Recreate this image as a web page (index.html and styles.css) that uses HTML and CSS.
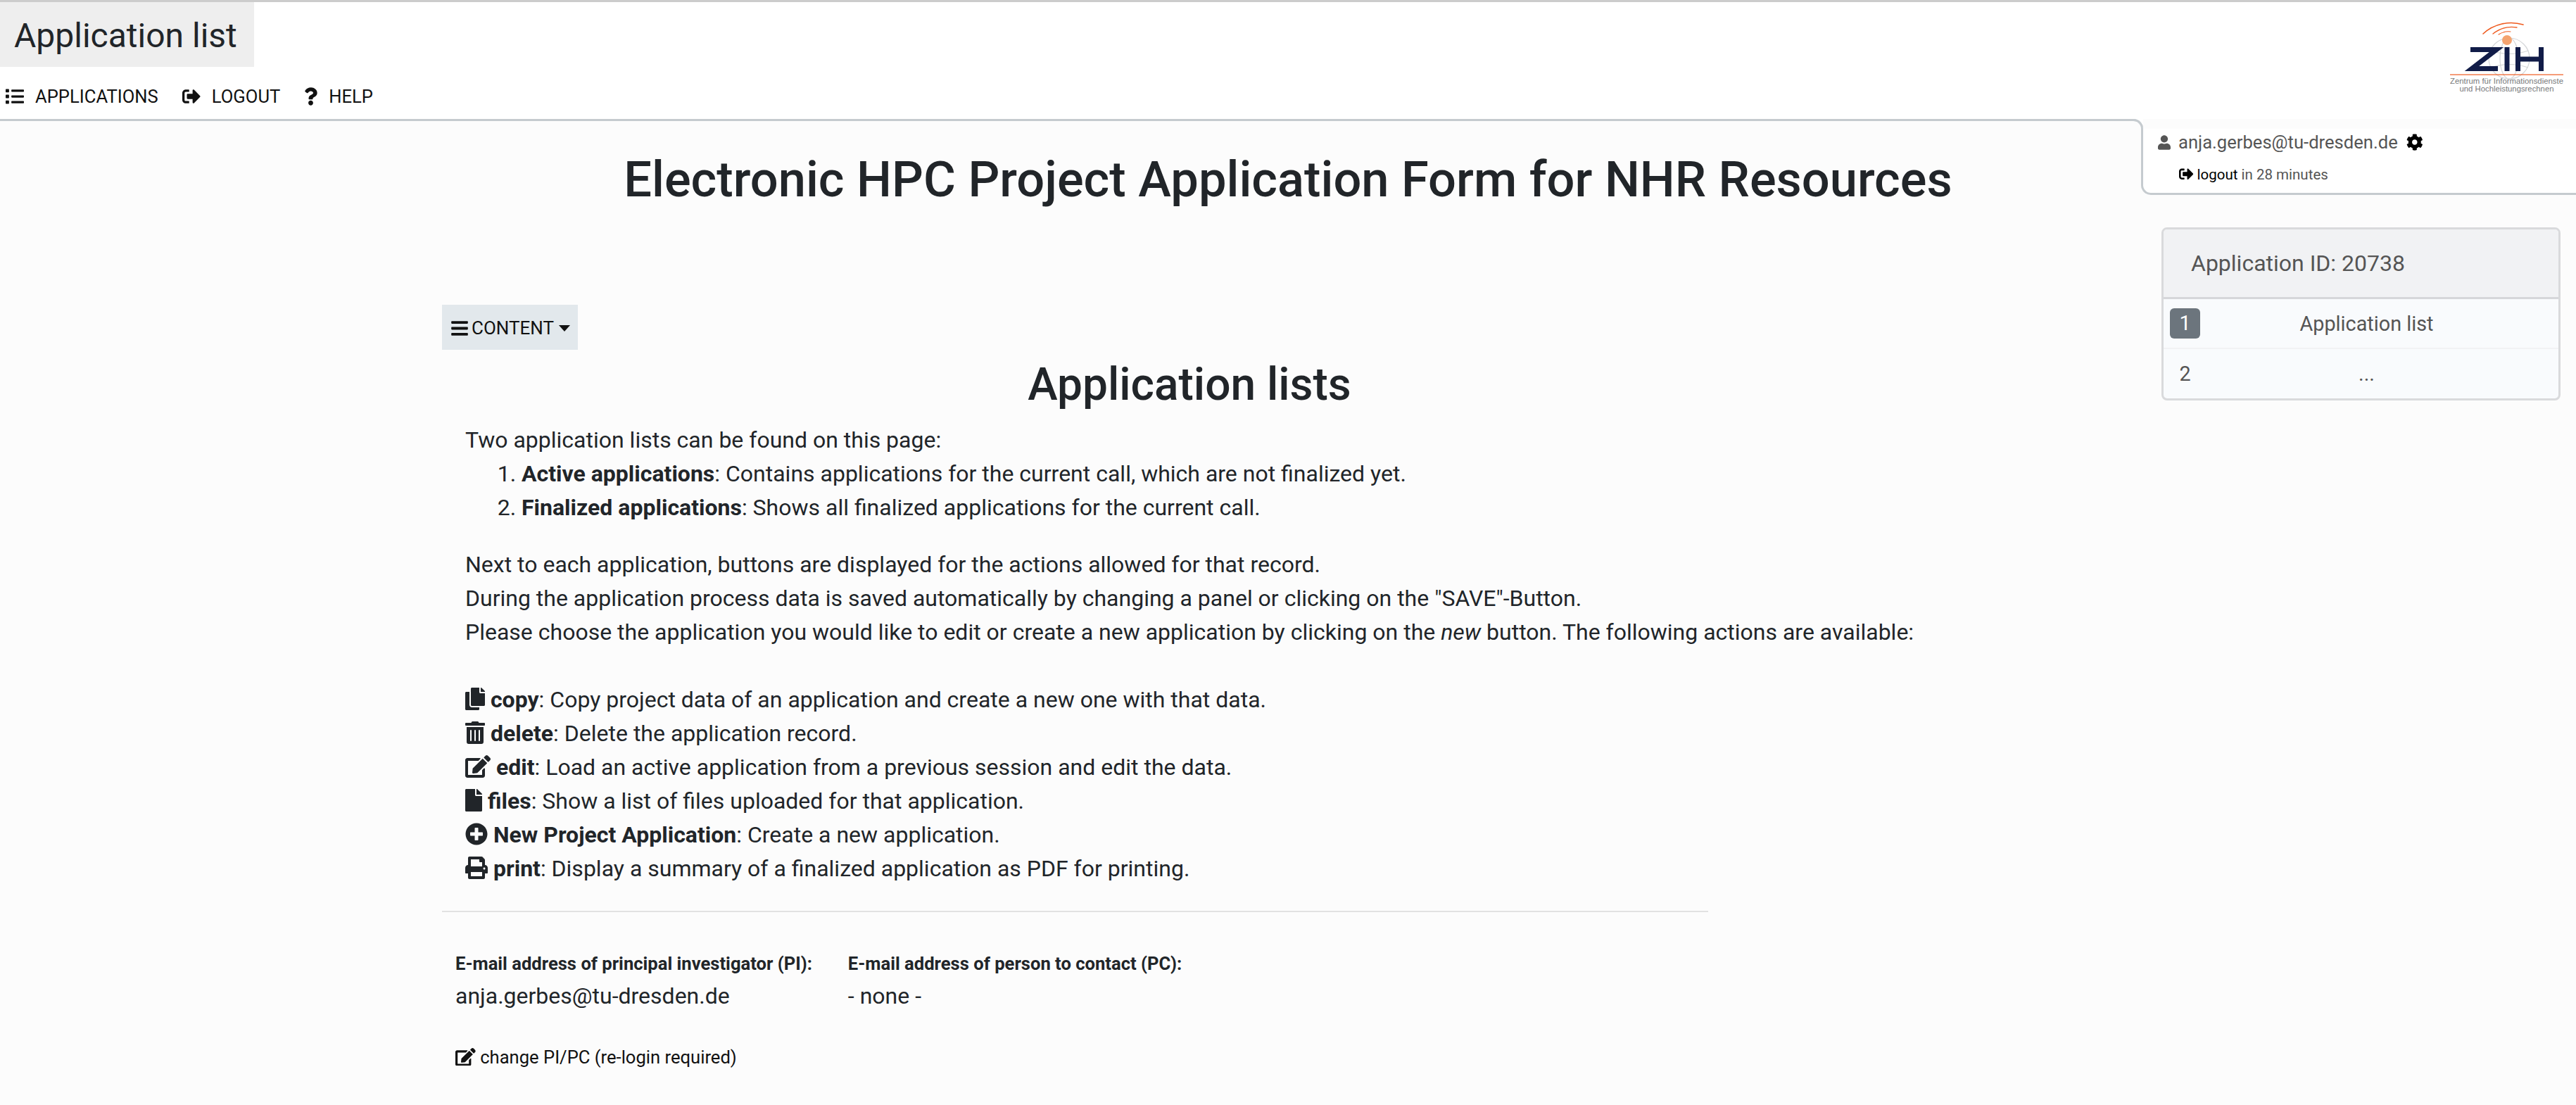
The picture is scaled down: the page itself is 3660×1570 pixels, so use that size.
FILE: index.html
```html
<!DOCTYPE html>
<html lang="en">
<head>
  <meta charset="UTF-8" />
  <title>Application list</title>
  <link rel="stylesheet" href="styles.css">
</head>
<body>
  <svg class="defs" aria-hidden="true">
    <symbol id="i-list" viewBox="0 0 512 512"><path d="M80 368H16a16 16 0 0 0-16 16v64a16 16 0 0 0 16 16h64a16 16 0 0 0 16-16v-64a16 16 0 0 0-16-16zm0-320H16A16 16 0 0 0 0 64v64a16 16 0 0 0 16 16h64a16 16 0 0 0 16-16V64a16 16 0 0 0-16-16zm0 160H16a16 16 0 0 0-16 16v64a16 16 0 0 0 16 16h64a16 16 0 0 0 16-16v-64a16 16 0 0 0-16-16zm416 176H176a16 16 0 0 0-16 16v32a16 16 0 0 0 16 16h320a16 16 0 0 0 16-16v-32a16 16 0 0 0-16-16zm0-320H176a16 16 0 0 0-16 16v32a16 16 0 0 0 16 16h320a16 16 0 0 0 16-16V80a16 16 0 0 0-16-16zm0 160H176a16 16 0 0 0-16 16v32a16 16 0 0 0 16 16h320a16 16 0 0 0 16-16v-32a16 16 0 0 0-16-16z"/></symbol>
    <symbol id="i-signout" viewBox="0 0 512 512"><path d="M497 273L329 441c-15 15-41 4.5-41-17v-96H152c-13.3 0-24-10.7-24-24v-96c0-13.3 10.7-24 24-24h136V88c0-21.4 25.9-32 41-17l168 168c9.3 9.4 9.3 24.6 0 34zM192 436v-40c0-6.6-5.4-12-12-12H96c-17.7 0-32-14.3-32-32V160c0-17.7 14.3-32 32-32h84c6.6 0 12-5.4 12-12V76c0-6.6-5.4-12-12-12H96c-53 0-96 43-96 96v192c0 53 43 96 96 96h84c6.6 0 12-5.4 12-12z"/></symbol>
    <symbol id="i-question" viewBox="0 0 384 512"><path d="M202.021 0C122.202 0 70.503 32.703 29.914 91.026c-7.363 10.58-5.093 25.086 5.178 32.874l43.138 32.709c10.373 7.865 25.132 6.026 33.253-4.148 25.049-31.381 43.63-49.449 82.757-49.449 30.764 0 68.816 19.799 68.816 49.631 0 22.552-18.617 34.134-48.993 51.164-35.423 19.86-82.299 44.576-82.299 106.405V320c0 13.255 10.745 24 24 24h72.471c13.255 0 24-10.745 24-24v-5.773c0-42.86 125.268-44.645 125.268-160.627C377.504 66.256 286.902 0 202.021 0zM192 373.459c-38.196 0-69.271 31.075-69.271 69.271 0 38.195 31.075 69.27 69.271 69.27s69.271-31.075 69.271-69.271-31.075-69.27-69.271-69.27z"/></symbol>
    <symbol id="i-user" viewBox="0 0 448 512"><path d="M224 256c70.7 0 128-57.3 128-128S294.7 0 224 0 96 57.3 96 128s57.3 128 128 128zm89.6 32h-16.7c-22.2 10.2-46.9 16-72.9 16s-50.6-5.8-72.9-16h-16.7C60.2 288 0 348.2 0 422.4V464c0 26.5 21.5 48 48 48h352c26.5 0 48-21.5 48-48v-41.6c0-74.2-60.2-134.4-134.4-134.4z"/></symbol>
    <symbol id="i-cog" viewBox="0 0 512 512"><path d="M487.4 315.7l-42.6-24.6c4.3-23.2 4.3-47 0-70.2l42.6-24.6c4.9-2.8 7.1-8.6 5.5-14-11.1-35.6-30-67.8-54.7-94.6-3.8-4.1-10-5.1-14.8-2.3L380.8 110c-17.9-15.4-38.5-27.3-60.8-35.1V25.8c0-5.6-3.9-10.5-9.4-11.7-36.7-8.2-74.3-7.8-109.2 0-5.5 1.2-9.4 6.1-9.4 11.7V75c-22.2 7.9-42.8 19.8-60.8 35.1L88.7 85.5c-4.9-2.8-11-1.9-14.8 2.3-24.7 26.7-43.6 58.9-54.7 94.6-1.7 5.4.6 11.2 5.5 14L67.3 221c-4.3 23.2-4.3 47 0 70.2l-42.6 24.6c-4.9 2.8-7.1 8.6-5.5 14 11.1 35.6 30 67.8 54.7 94.6 3.8 4.1 10 5.1 14.8 2.3l42.6-24.6c17.9 15.4 38.5 27.3 60.8 35.1v49.2c0 5.6 3.9 10.5 9.4 11.7 36.7 8.2 74.3 7.8 109.2 0 5.5-1.2 9.4-6.1 9.4-11.7v-49.2c22.2-7.9 42.8-19.8 60.8-35.1l42.6 24.6c4.9 2.8 11 1.9 14.8-2.3 24.7-26.7 43.6-58.9 54.7-94.6 1.5-5.5-.7-11.3-5.6-14.1zM256 336c-44.1 0-80-35.9-80-80s35.9-80 80-80 80 35.9 80 80-35.9 80-80 80z"/></symbol>
    <symbol id="i-bars" viewBox="0 0 448 512"><path d="M16 132h416c8.837 0 16-7.163 16-16V76c0-8.837-7.163-16-16-16H16C7.163 60 0 67.163 0 76v40c0 8.837 7.163 16 16 16zm0 160h416c8.837 0 16-7.163 16-16v-40c0-8.837-7.163-16-16-16H16c-8.837 0-16 7.163-16 16v40c0 8.837 7.163 16 16 16zm0 160h416c8.837 0 16-7.163 16-16v-40c0-8.837-7.163-16-16-16H16c-8.837 0-16 7.163-16 16v40c0 8.837 7.163 16 16 16z"/></symbol>
    <symbol id="i-copy" viewBox="0 0 448 512"><path d="M320 448v40c0 13.255-10.745 24-24 24H24c-13.255 0-24-10.745-24-24V120c0-13.255 10.745-24 24-24h72v296c0 30.879 25.121 56 56 56h168zm0-344V0H152c-13.255 0-24 10.745-24 24v368c0 13.255 10.745 24 24 24h272c13.255 0 24-10.745 24-24V128H344c-13.2 0-24-10.8-24-24zm120.971-31.029L375.029 7.029A24 24 0 0 0 358.059 0H352v96h96v-6.059a24 24 0 0 0-7.029-16.97z"/></symbol>
    <symbol id="i-trash" viewBox="0 0 448 512"><path d="M32 464a48 48 0 0 0 48 48h288a48 48 0 0 0 48-48V128H32zm272-256a16 16 0 0 1 32 0v224a16 16 0 0 1-32 0zm-96 0a16 16 0 0 1 32 0v224a16 16 0 0 1-32 0zm-96 0a16 16 0 0 1 32 0v224a16 16 0 0 1-32 0zM432 32H312l-9.4-18.7A24 24 0 0 0 281.1 0H166.8a23.72 23.72 0 0 0-21.4 13.3L136 32H16A16 16 0 0 0 0 48v32a16 16 0 0 0 16 16h416a16 16 0 0 0 16-16V48a16 16 0 0 0-16-16z"/></symbol>
    <symbol id="i-edit" viewBox="0 0 576 512"><path d="M402.6 83.2l90.2 90.2c3.8 3.8 3.8 10 0 13.8L274.4 405.6l-92.8 10.3c-12.4 1.4-22.9-9.1-21.5-21.5l10.3-92.8L388.8 83.2c3.8-3.8 10-3.8 13.8 0zm162-22.9l-48.8-48.8c-15.2-15.2-39.9-15.2-55.2 0l-35.4 35.4c-3.8 3.8-3.8 10 0 13.8l90.2 90.2c3.8 3.8 10 3.8 13.8 0l35.4-35.4c15.2-15.3 15.2-40 0-55.2zM384 346.2V448H64V128h229.8c3.2 0 6.2-1.3 8.5-3.5l40-40c7.6-7.6 2.2-20.5-8.5-20.5H48C21.5 64 0 85.5 0 112v352c0 26.5 21.5 48 48 48h352c26.5 0 48-21.5 48-48V306.2c0-10.7-12.9-16-20.5-8.5l-40 40c-2.2 2.3-3.5 5.3-3.5 8.5z"/></symbol>
    <symbol id="i-file" viewBox="0 0 384 512"><path d="M224 136V0H24C10.7 0 0 10.7 0 24v464c0 13.3 10.7 24 24 24h336c13.3 0 24-10.7 24-24V160H248c-13.2 0-24-10.8-24-24zm160-14.1v6.1H256V0h6.1c6.4 0 12.5 2.5 17 7l97.9 98c4.5 4.5 7 10.6 7 16.9z"/></symbol>
    <symbol id="i-plus" viewBox="0 0 512 512"><path d="M256 8C119 8 8 119 8 256s111 248 248 248 248-111 248-248S393 8 256 8zm144 276c0 6.6-5.4 12-12 12h-92v92c0 6.6-5.4 12-12 12h-56c-6.6 0-12-5.4-12-12v-92h-92c-6.6 0-12-5.4-12-12v-56c0-6.6 5.4-12 12-12h92v-92c0-6.6 5.4-12 12-12h56c6.6 0 12 5.4 12 12v92h92c6.6 0 12 5.4 12 12v56z"/></symbol>
    <symbol id="i-print" viewBox="0 0 512 512"><path d="M448 192V77.25c0-8.49-3.37-16.62-9.37-22.63L393.37 9.37c-6-6-14.14-9.37-22.63-9.37H96C78.33 0 64 14.33 64 32v160c-35.35 0-64 28.65-64 64v112c0 8.84 7.16 16 16 16h48v96c0 17.67 14.33 32 32 32h320c17.67 0 32-14.33 32-32v-96h48c8.84 0 16-7.16 16-16V256c0-35.35-28.65-64-64-64zm-64 256H128v-96h256v96zm0-224H128V64h192v48c0 8.84 7.16 16 16 16h48v96zm48 72c-13.25 0-24-10.75-24-24 0-13.26 10.75-24 24-24s24 10.74 24 24c0 13.25-10.75 24-24 24z"/></symbol>
  </svg>

  <header class="topbar">
    <div class="topbar-left">
      <div class="page-title">Application list</div>
      <nav class="mainnav">
        <a class="nav-link"><svg class="ico w16"><use href="#i-list"/></svg>APPLICATIONS</a>
        <a class="nav-link"><svg class="ico w16"><use href="#i-signout"/></svg>LOGOUT</a>
        <a class="nav-link"><svg class="ico w12"><use href="#i-question"/></svg>HELP</a>
      </nav>
    </div>
    <svg class="logo" viewBox="0 0 220 120" width="220" height="120">
      <g fill="none" stroke="#d4d6d8" stroke-width="1.2">
        <circle cx="125" cy="63" r="29"/>
        <ellipse cx="125" cy="63" rx="13" ry="29"/>
        <path d="M98 52q27 9 54 0M98 76q27-9 54 0"/>
      </g>
      <g fill="none" stroke="#ef5a1e" stroke-linecap="round">
        <path d="M88 28C103 14 125 9 145 15" stroke-width="1.6"/>
        <path d="M102 28C112 20 124 17 136 19" stroke-width="1.3"/>
        <path d="M110 29C115 26 121 24 127 25" stroke-width="1.1"/>
      </g>
      <circle cx="122" cy="37" r="7" fill="#f4a36f"/>
      <g fill="none" stroke="#111c48" stroke-width="7">
        <path d="M70 50.500H107L72 77.500H109"/>
        <path d="M122 47V81"/>
        <path d="M137.500 47V81M170.500 47V81M137.500 64H170.500"/>
      </g>
      <rect x="41" y="85.500" width="161" height="1.200" fill="#ef5a1e"/>
      <text class="logo-text" x="121.500" y="99" textLength="161" lengthAdjust="spacingAndGlyphs">Zentrum für Informationsdienste</text>
      <text class="logo-text" x="121.500" y="110" textLength="134" lengthAdjust="spacingAndGlyphs">und Hochleistungsrechnen</text>
    </svg>
  </header>

  <div class="page-row">
    <main class="content">
      <h1 class="form-title">Electronic HPC Project Application Form for NHR Resources</h1>

      <button class="menu-btn" type="button">
        <svg class="ico w14"><use href="#i-bars"/></svg>CONTENT<span class="caret"></span>
      </button>

      <section class="panel">
        <h2 class="panel-title">Application lists</h2>
        <div class="panel-text">
          Two application lists can be found on this page:
          <ol class="lists">
            <li><b>Active applications</b>: Contains applications for the current call, which are not finalized yet.</li>
            <li><b>Finalized applications</b>: Shows all finalized applications for the current call.</li>
          </ol>
          <p class="intro">
            Next to each application, buttons are displayed for the actions allowed for that record.<br>
            During the application process data is saved automatically by changing a panel or clicking on the "SAVE"-Button.<br>
            Please choose the application you would like to edit or create a new application by clicking on the <i>new</i> button. The following actions are available:
          </p>
          <ul class="actions">
            <li><svg class="ico"><use href="#i-copy"/></svg> <b>copy</b>: Copy project data of an application and create a new one with that data.</li>
            <li><svg class="ico"><use href="#i-trash"/></svg> <b>delete</b>: Delete the application record.</li>
            <li><svg class="ico wide"><use href="#i-edit"/></svg> <b>edit</b>: Load an active application from a previous session and edit the data.</li>
            <li><svg class="ico narrow"><use href="#i-file"/></svg> <b>files</b>: Show a list of files uploaded for that application.</li>
            <li><svg class="ico full"><use href="#i-plus"/></svg> <b>New Project Application</b>: Create a new application.</li>
            <li><svg class="ico full"><use href="#i-print"/></svg> <b>print</b>: Display a summary of a finalized application as PDF for printing.</li>
          </ul>
        </div>
        <hr class="rule">
        <div class="contacts">
          <div class="contact">
            <div class="contact-label">E-mail address of principal investigator (PI):</div>
            <div class="contact-value">anja.gerbes@tu-dresden.de</div>
          </div>
          <div class="contact">
            <div class="contact-label">E-mail address of person to contact (PC):</div>
            <div class="contact-value">- none -</div>
          </div>
        </div>
        <a class="change-link"><svg class="ico wide"><use href="#i-edit"/></svg> change PI/PC (re-login required)</a>
      </section>
    </main>

    <aside class="sidebar">
      <div class="userbox">
        <div class="user-line">
          <svg class="ico user-ico"><use href="#i-user"/></svg>
          <span>anja.gerbes@tu-dresden.de</span>
          <svg class="ico full cog-ico"><use href="#i-cog"/></svg>
        </div>
        <div class="session-line"><svg class="ico full"><use href="#i-signout"/></svg> <a class="session-link">logout</a> in 28 minutes</div>
      </div>

      <div class="card">
        <div class="card-head">Application ID: 20738</div>
        <div class="step step-on"><span class="step-no">1</span><span class="step-name">Application list</span></div>
        <div class="step"><span class="step-no">2</span><span class="step-name">...</span></div>
      </div>
    </aside>
  </div>
</body>
</html>
```

FILE: styles.css
```css
* {
  box-sizing: border-box;
}
html, body {
  margin: 0;
  height: 100%;
}
body {
  display: flex;
  flex-direction: column;
  font-family: Roboto, "Liberation Sans", sans-serif;
  font-size: 32px;
  line-height: 48px;
  color: #212529;
  background-color: #fcfcfc;
  overflow: hidden;
}
.defs {
  display: none;
}
.ico {
  display: inline-block;
  height: 1em;
  width: 0.875em;
  vertical-align: -0.125em;
  fill: currentColor;
}
.ico.wide { width: 1.125em; }
.ico.narrow { width: 0.75em; }
.ico.full { width: 1em; }

/* top bar */
.topbar {
  display: flex;
  justify-content: space-between;
  height: 169px;
  background-color: #fff;
  border-top: 3px solid #ccc;
}
.page-title {
  width: 361px;
  height: 92px;
  padding-left: 20px;
  font-size: 48px;
  line-height: 96px;
  background-color: #eee;
}
.mainnav {
  display: flex;
  gap: 34px;
  padding: 21px 0 0 8px;
}
.nav-link {
  display: flex;
  align-items: center;
  gap: 16px;
  font-size: 25.6px;
  line-height: 42px;
  color: #111;
}
.nav-link .w16 { width: 26px; height: 26px; }
.nav-link .w12 { width: 19px; height: 26px; }
.logo {
  display: block;
  margin-top: 17px;
}
.logo-text {
  font-family: "Liberation Sans", sans-serif;
  font-size: 11px;
  text-anchor: middle;
  fill: #77797b;
}

/* main area */
.page-row {
  flex: 1;
  display: flex;
  background-color: #fff;
}
.content {
  position: relative;
  flex: 1;
  padding: 45px 13px 0 628px;
  background-color: #fcfcfc;
  border-top: 3px solid #c5cbcf;
  border-top-right-radius: 14px;
}
.content::after {
  content: "";
  position: absolute;
  top: -3px;
  right: 0;
  width: 14px;
  height: 14px;
  border-top: 3px solid #c5cbcf;
  border-right: 3px solid #c5cbcf;
  border-top-right-radius: 14px;
}
.form-title {
  margin: 0 0 139px;
  font-size: 70.4px;
  font-weight: 500;
  line-height: 77px;
  text-align: center;
}
.menu-btn {
  display: block;
  width: 193px;
  height: 64px;
  padding: 1px 0 0 13px;
  border: none;
  text-align: left;
  font-family: inherit;
  font-size: 26px;
  color: #111;
  background-color: #e2e8ec;
}
.menu-btn .ico {
  width: 24px;
  height: 27px;
  margin-right: 5px;
  vertical-align: -5px;
}
.caret {
  display: inline-block;
  margin-left: 7px;
  vertical-align: 4px;
  border-top: 9px solid #111;
  border-left: 8px solid transparent;
  border-right: 8px solid transparent;
}
.panel-title {
  width: 2124px;
  margin: 11px 0 16px;
  font-size: 64px;
  font-weight: 500;
  line-height: 77px;
  text-align: center;
}
.panel-text {
  padding-left: 33px;
}
.lists {
  margin: 0 0 33px;
  padding-left: 80px;
}
.intro {
  margin: 0 0 48px;
}
.actions {
  margin: 0;
  padding: 0;
  list-style: none;
}
.rule {
  width: 1799px;
  margin: 36px 0 0;
  border: none;
  border-top: 2px solid #e2e2e2;
}

/* PI and PC addresses */
.contacts {
  display: flex;
  gap: 51px;
  padding: 51px 0 0 19px;
}
.contact-label {
  font-size: 25.6px;
  font-weight: 700;
  line-height: 44px;
}
.contact-value {
  line-height: 48px;
}
.change-link {
  display: block;
  margin: 39px 0 0 19px;
  font-size: 25.6px;
  line-height: 48px;
  color: #111;
}

/* right column */
.sidebar {
  width: 615px;
  background-color: #fcfcfc;
}
.userbox {
  position: relative;
  height: 94px;
  margin: 14px 0 0 -3px;
  padding-left: 21px;
  background-color: #fff;
  border-left: 3px solid #c5cbcf;
  border-bottom: 3px solid #c5cbcf;
  border-bottom-left-radius: 14px;
  color: #555;
  font-size: 25.6px;
  line-height: 38px;
}
.user-line {
  display: flex;
  align-items: center;
  gap: 11px;
}
.user-ico {
  width: 18px;
  height: 21px;
}
.cog-ico {
  width: 24px;
  height: 24px;
  color: #000;
}
.session-line {
  padding-left: 30px;
  font-size: 20.5px;
  line-height: 54px;
}
.session-line .ico {
  color: #000;
}
.session-link {
  color: #000;
}
.card {
  width: 567px;
  margin: 46px 0 0 26px;
  border: 3px solid #d9dadc;
  border-radius: 8px;
  background-color: #f9fbfd;
  color: #555;
  overflow: hidden;
}
.card-head {
  height: 99px;
  padding-left: 39px;
  font-size: 32px;
  line-height: 97px;
  background-color: #f1f2f4;
  border-bottom: 3px solid #d6d7da;
}
.step {
  display: flex;
  align-items: center;
  height: 70px;
  font-size: 28.8px;
}
.step-on {
  height: 71px;
  border-bottom: 2px solid #f1f2f4;
}
.step-no {
  flex: none;
  width: 43px;
  height: 43px;
  margin-left: 9px;
  line-height: 43px;
  text-align: center;
  border-radius: 6px;
}
.step-on .step-no {
  color: #fff;
  background-color: #6c757d;
}
.step-name {
  flex: 1;
  padding-right: 36px;
  text-align: center;
}
```
